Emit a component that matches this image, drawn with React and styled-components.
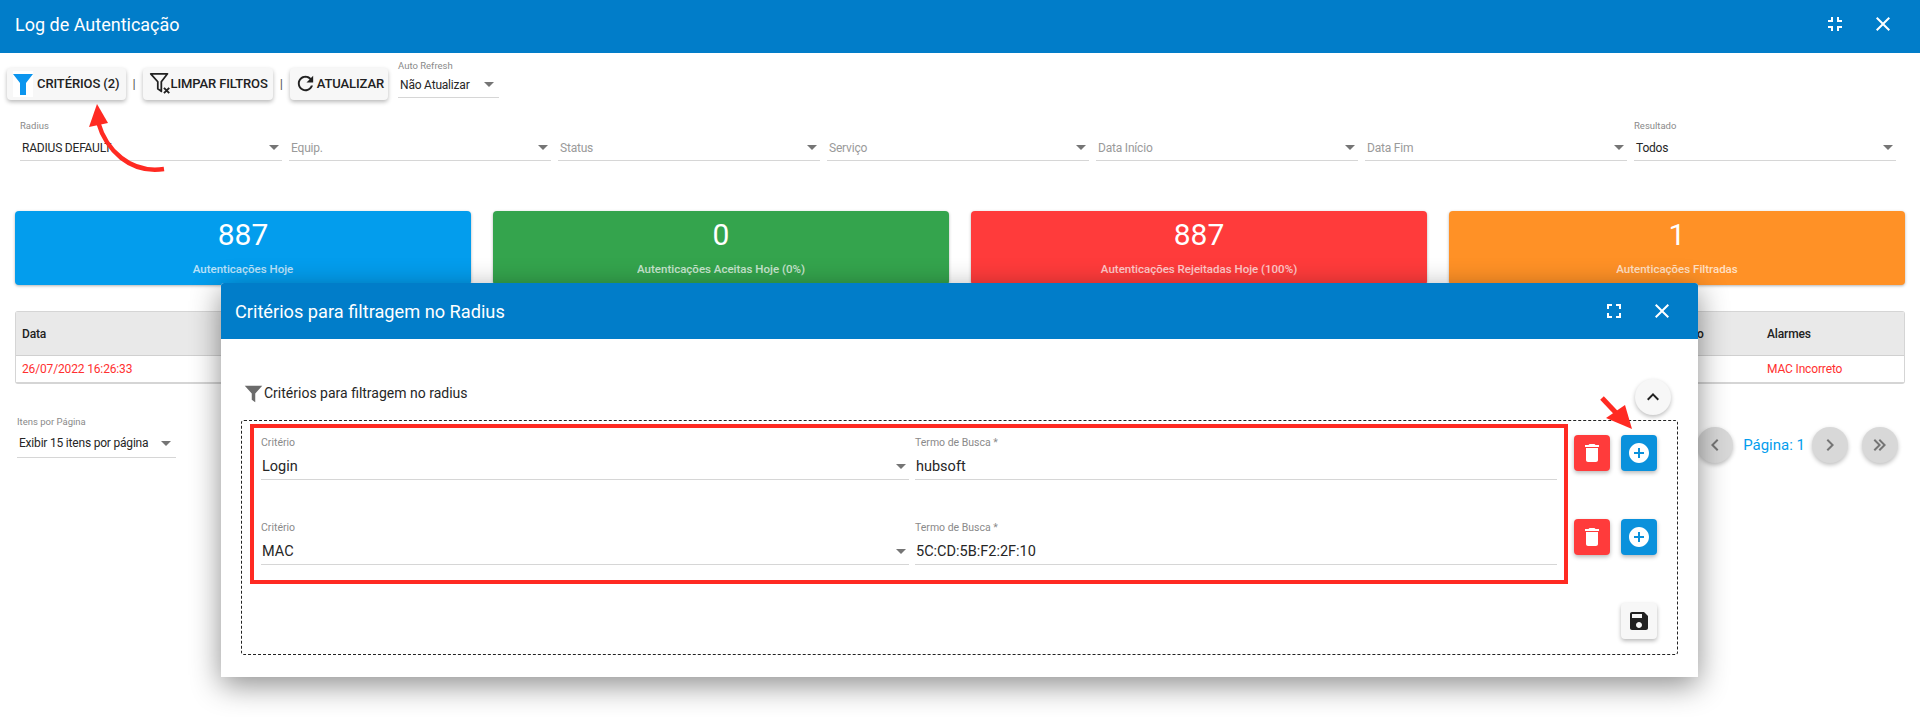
import React from "react";
import styled, { createGlobalStyle } from "styled-components";

const GlobalStyle = createGlobalStyle`
  html, body {
    margin: 0;
    padding: 0;
    height: 717px;
    overflow: hidden;
    background: #fff;
    font-family: Roboto, "Liberation Sans", sans-serif;
    color: #212121;
  }
  * { box-sizing: border-box; }
`;

const ICONS = {
  funnel: "M2 2h20l-7 9v12H9V11z",
  funnelSoft: "M2 3h20l-8 9v10l-4-3v-7z",
  refresh:
    "M17.65 6.35C16.2 4.9 14.21 4 12 4c-4.42 0-7.99 3.58-7.99 8s3.57 8 7.99 8c3.73 0 6.84-2.55 7.73-6h-2.08c-.82 2.33-3.04 4-5.65 4-3.31 0-6-2.69-6-6s2.69-6 6-6c1.66 0 3.14.69 4.22 1.78L13 11h7V4l-2.35 2.35z",
  trash: "M6 19c0 1.1.9 2 2 2h8c1.1 0 2-.9 2-2V7H6v12zM19 4h-3.5l-1-1h-5l-1 1H5v2h14V4z",
  plus: "M12 2C6.48 2 2 6.48 2 12s4.48 10 10 10 10-4.48 10-10S17.52 2 12 2zm5 11h-4v4h-2v-4H7v-2h4V7h2v4h4v2z",
  save: "M17 3H5c-1.11 0-2 .9-2 2v14c0 1.1.89 2 2 2h14c1.1 0 2-.9 2-2V7l-4-4zm-5 16c-1.66 0-3-1.34-3-3s1.34-3 3-3 3 1.34 3 3-1.34 3-3 3zm3-10H5V5h10v4z",
  expand: "M7 14H5v5h5v-2H7v-3zm-2-4h2V7h3V5H5v5zm12 7h-3v2h5v-5h-2v3zM14 5v2h3v3h2V5h-5z",
  shrink: "M5 16h3v3h2v-5H5v2zm3-8H5v2h5V5H8v3zm6 11h2v-3h3v-2h-5v5zm2-11V5h-2v5h5V8h-3z",
  close:
    "M19 6.41L17.59 5 12 10.59 6.41 5 5 6.41 10.59 12 5 17.59 6.41 19 12 13.41 17.59 19 19 17.59 13.41 12z",
  up: "M7.41 15.41L12 10.83l4.59 4.58L18 14l-6-6-6 6z",
  left: "M15.41 16.59L10.83 12l4.58-4.59L14 6l-6 6 6 6z",
  right: "M8.59 16.59L13.17 12 8.59 7.41 10 6l6 6-6 6z",
  last: "M5.59 7.41L10.18 12l-4.59 4.59L7 18l6-6-6-6zM12 6l-1.41 1.41L15.17 12l-4.58 4.59L12 18l6-6z",
};

const Icon = ({ name, size = 24, color = "currentColor" }) => (
  <svg width={size} height={size} viewBox="0 0 24 24" fill={color} style={{ flex: "none" }}>
    <path d={ICONS[name]} />
  </svg>
);

const ClearFilterIcon = () => (
  <svg width="22" height="25" viewBox="0 0 25 28" fill="none" stroke="#212121" style={{ flex: "none" }}>
    <path d="M2 3h19l-7 9v11l-4-3v-8z" strokeWidth="2" strokeLinejoin="round" />
    <path d="M17 19l6 6M23 19l-6 6" strokeWidth="2.2" />
  </svg>
);

const Page = styled.div`
  position: relative;
  width: 1920px;
  height: 717px;
  overflow: hidden;
`;

const TopBar = styled.header`
  display: flex;
  align-items: center;
  justify-content: space-between;
  height: 53px;
  padding: 0 25px 5px 15px;
  background: #017dc9;
  color: #fff;
  h1 {
    margin: 0;
    font-size: 18px;
    font-weight: 400;
  }
`;

const BarActions = styled.div`
  display: flex;
  align-items: center;
  gap: 24px;
  color: #fff;
`;

const Toolbar = styled.div`
  display: flex;
  align-items: center;
  height: 58px;
  padding: 3px 0 0 7px;
`;

const ToolButton = styled.div`
  display: flex;
  align-items: center;
  gap: ${(p) => p.$gap || 0}px;
  height: 32px;
  padding: 0 ${(p) => p.$pad || 5}px 0 ${(p) => p.$padLeft || 5}px;
  background: #f7f7f7;
  border-radius: 4px;
  box-shadow: 0 2px 4px rgba(0, 0, 0, 0.28);
  font-size: 13px;
  font-weight: 500;
  letter-spacing: -0.1px;
  white-space: nowrap;
`;

const IconPatch = styled.span`
  display: flex;
  align-items: center;
  justify-content: center;
  width: 20px;
  height: 26px;
  background: #fff;
`;

const Bar = styled.span`
  width: 17px;
  text-align: center;
  font-size: 13px;
  color: #555;
`;

const Field = styled.div`
  position: relative;
  display: flex;
  flex-direction: column;
  width: ${(p) => (p.$width ? `${p.$width}px` : "auto")};
  border-bottom: 1px solid #d6d6d6;
`;

const FieldLabel = styled.label`
  height: ${(p) => p.$h || 14}px;
  font-size: ${(p) => p.$size || 9.5}px;
  line-height: ${(p) => p.$h || 14}px;
  color: #8a8a8a;
  white-space: nowrap;
`;

const FieldValue = styled.div`
  display: flex;
  align-items: center;
  justify-content: space-between;
  height: ${(p) => p.$h || 24}px;
  padding-top: ${(p) => p.$top || 0}px;
  padding-left: ${(p) => p.$pad ?? 2}px;
  font-size: ${(p) => p.$size || 12}px;
  letter-spacing: ${(p) => (p.$size ? 0 : -0.2)}px;
  color: ${(p) => (p.$empty ? "#9a9a9a" : "#262626")};
  white-space: nowrap;
`;

const Caret = styled.i`
  width: 0;
  height: 0;
  margin-right: ${(p) => p.$right ?? 5}px;
  border-left: 5px solid transparent;
  border-right: 5px solid transparent;
  border-top: 5px solid #757575;
`;

const AutoRefresh = styled(Field)`
  margin: -9px 0 0 10px;
`;

const Filters = styled.div`
  display: grid;
  grid-template-columns: repeat(7, 262px);
  column-gap: 7px;
  padding: 0 0 0 20px;
  margin-top: 8px;
`;

const Cards = styled.div`
  display: grid;
  grid-template-columns: repeat(4, 456px);
  column-gap: 22px;
  margin: 50px 0 0 15px;
`;

const Card = styled.div`
  display: flex;
  flex-direction: column;
  align-items: center;
  height: 74px;
  padding-top: 6px;
  background: ${(p) => p.$bg};
  border-radius: 4px;
  box-shadow: 0 1px 3px rgba(0, 0, 0, 0.3);
  color: #fff;
  strong {
    font-size: 30px;
    font-weight: 400;
    line-height: 36px;
  }
  span {
    margin-top: 9px;
    font-size: 11.5px;
    font-weight: 500;
    opacity: 0.72;
  }
`;

const Table = styled.div`
  width: 1890px;
  margin: 26px 0 0 15px;
  border: 1px solid #d5d5d5;
  border-bottom-width: 2px;
  border-radius: 3px;
  font-size: 12px;
  letter-spacing: -0.15px;
`;

const TableRow = styled.div`
  display: grid;
  grid-template-columns: 1fr 70px 137px;
  align-items: center;
  height: ${(p) => p.$h}px;
  padding-left: 6px;
  background: ${(p) => p.$bg || "#fff"};
  border-bottom: ${(p) => (p.$line ? "1px solid #d0d0d0" : "none")};
  color: ${(p) => p.$color || "#212121"};
  font-weight: ${(p) => p.$weight || 400};
`;

const HiddenColumnEnd = styled.span`
  padding-right: 66px;
  text-align: right;
`;

const Footer = styled.div`
  display: flex;
  align-items: flex-start;
  justify-content: space-between;
  padding: 0 22px 0 17px;
  margin-top: 31px;
`;

const Pager = styled.div`
  display: flex;
  align-items: center;
  gap: 14px;
  margin-top: 12px;
`;

const RoundButton = styled.div`
  display: flex;
  align-items: center;
  justify-content: center;
  width: 36px;
  height: 36px;
  border-radius: 50%;
  background: ${(p) => p.$bg || "#d8d8d8"};
  box-shadow: 0 2px 4px rgba(0, 0, 0, 0.25);
  color: ${(p) => p.$color || "#757575"};
`;

const PageLabel = styled.span`
  margin: 0 -7px 0 -4px;
  font-size: 15px;
  color: #039ded;
`;

const Modal = styled.section`
  position: absolute;
  left: 221px;
  top: 283px;
  width: 1477px;
  height: 394px;
  background: #fff;
  border-radius: 3px 3px 0 0;
  box-shadow: 0 8px 30px rgba(0, 0, 0, 0.45);
`;

const ModalHeader = styled.div`
  display: flex;
  align-items: center;
  justify-content: space-between;
  height: 56px;
  padding: 0 24px 0 14px;
  background: #017dc9;
  border-radius: 3px 3px 0 0;
  color: #fff;
  h2 {
    margin: 0;
    font-size: 18.2px;
    font-weight: 400;
  }
`;

const SectionHead = styled.div`
  display: flex;
  align-items: center;
  justify-content: space-between;
  height: 40px;
  margin-top: 37px;
  padding: 2px 27px 0 22px;
`;

const SectionTitle = styled.div`
  display: flex;
  align-items: center;
  font-size: 14px;
  color: #262626;
  margin-top: -8px;
`;

const DashedBox = styled.div`
  position: relative;
  display: flex;
  flex-direction: column;
  width: 1437px;
  height: 235px;
  margin: 4px 0 0 20px;
  padding: 3px 0 0 8px;
  border: 1px dashed #222;
  border-radius: 3px;
`;

const CriteriaArea = styled.div`
  display: flex;
  flex-direction: column;
  gap: 41px;
  width: 1318px;
  height: 160px;
  padding: 8px 7px 0 7px;
  border: 4px solid #ff2a22;
`;

const CriteriaRow = styled.div`
  display: grid;
  grid-template-columns: 648px 1fr;
  column-gap: 6px;
`;

const Actions = styled.div`
  position: absolute;
  top: 14px;
  right: 20px;
  display: grid;
  grid-template-columns: 36px 36px;
  grid-auto-rows: 36px;
  gap: 48px 11px;
`;

const SquareButton = styled.div`
  display: flex;
  align-items: center;
  justify-content: center;
  grid-column: ${(p) => p.$col || "auto"};
  width: 36px;
  height: 36px;
  background: ${(p) => p.$bg};
  border-radius: 4px;
  box-shadow: 0 2px 4px rgba(0, 0, 0, 0.28);
  color: ${(p) => p.$color || "#fff"};
`;

const Arrow = styled.svg`
  position: absolute;
  left: 0;
  top: 0;
  pointer-events: none;
`;

const Criterion = ({ label, term }) => (
  <CriteriaRow>
    <Field>
      <FieldLabel $size={10.5}>Critério</FieldLabel>
      <FieldValue $size={14.5} $h={29} $top={3} $pad={1}>
        {label}
        <Caret $right={3} />
      </FieldValue>
    </Field>
    <Field>
      <FieldLabel $size={10.5}>Termo de Busca *</FieldLabel>
      <FieldValue $size={14.5} $h={29} $top={3} $pad={1}>{term}</FieldValue>
    </Field>
  </CriteriaRow>
);

const filters = [
  { label: "Radius", value: "RADIUS DEFAULT" },
  { value: "Equip." },
  { value: "Status" },
  { value: "Serviço" },
  { value: "Data Início" },
  { value: "Data Fim" },
  { label: "Resultado", value: "Todos" },
];

const cards = [
  { bg: "#039ded", value: 887, label: "Autenticações Hoje" },
  { bg: "#34a44d", value: 0, label: "Autenticações Aceitas Hoje (0%)" },
  { bg: "#ff3b3b", value: 887, label: "Autenticações Rejeitadas Hoje (100%)" },
  { bg: "#ff9126", value: 1, label: "Autenticações Filtradas" },
];

export default function App() {
  return (
    <Page>
      <GlobalStyle />
      <TopBar>
        <h1>Log de Autenticação</h1>
        <BarActions>
          <Icon name="shrink" />
          <Icon name="close" />
        </BarActions>
      </TopBar>

      <Toolbar>
        <ToolButton $pad={6} $padLeft={6} $gap={4}>
          <IconPatch>
            <Icon name="funnel" size={24} color="#0b95ee" />
          </IconPatch>
          CRITÉRIOS (2)
        </ToolButton>
        <Bar>|</Bar>
        <ToolButton $pad={5} $padLeft={6}>
          <ClearFilterIcon />
          LIMPAR FILTROS
        </ToolButton>
        <Bar>|</Bar>
        <ToolButton $pad={4} $padLeft={4}>
          <Icon name="refresh" size={23} />
          ATUALIZAR
        </ToolButton>
        <AutoRefresh $width={101}>
          <FieldLabel $h={12}>Auto Refresh</FieldLabel>
          <FieldValue $h={25}>
            Não Atualizar
            <Caret />
          </FieldValue>
        </AutoRefresh>
      </Toolbar>

      <Filters>
        {filters.map((f) => (
          <Field key={f.value}>
            <FieldLabel>{f.label}</FieldLabel>
            <FieldValue $empty={!f.label} $h={27} $top={2}>
              {f.value}
              <Caret $right={3} />
            </FieldValue>
          </Field>
        ))}
      </Filters>

      <Cards>
        {cards.map((c) => (
          <Card key={c.label} $bg={c.bg}>
            <strong>{c.value}</strong>
            <span>{c.label}</span>
          </Card>
        ))}
      </Cards>

      <Table>
        <TableRow $h={44} $bg="#e9e9e9" $line $weight={500}>
          <span>Data</span>
          <HiddenColumnEnd>o</HiddenColumnEnd>
          <span>Alarmes</span>
        </TableRow>
        <TableRow $h={26} $color="#ff3030">
          <span>26/07/2022 16:26:33</span>
          <span />
          <span>MAC Incorreto</span>
        </TableRow>
      </Table>

      <Footer>
        <Field $width={159}>
          <FieldLabel>Itens por Página</FieldLabel>
          <FieldValue $h={28}>
            Exibir 15 itens por página
            <Caret />
          </FieldValue>
        </Field>
        <Pager>
          <RoundButton><Icon name="left" /></RoundButton>
          <PageLabel>Página: 1</PageLabel>
          <RoundButton><Icon name="right" /></RoundButton>
          <RoundButton><Icon name="last" /></RoundButton>
        </Pager>
      </Footer>

      <Modal>
        <ModalHeader>
          <h2>Critérios para filtragem no Radius</h2>
          <BarActions>
            <Icon name="expand" />
            <Icon name="close" />
          </BarActions>
        </ModalHeader>
        <SectionHead>
          <SectionTitle>
            <Icon name="funnelSoft" size={21} color="#6b6b6b" />
            Critérios para filtragem no radius
          </SectionTitle>
          <RoundButton $bg="#f7f7f7" $color="#212121"><Icon name="up" /></RoundButton>
        </SectionHead>
        <DashedBox>
          <CriteriaArea>
            <Criterion label="Login" term="hubsoft" />
            <Criterion label="MAC" term="5C:CD:5B:F2:2F:10" />
          </CriteriaArea>
          <Actions>
            <SquareButton $bg="#ff3b3b"><Icon name="trash" /></SquareButton>
            <SquareButton $bg="#0a91dc"><Icon name="plus" /></SquareButton>
            <SquareButton $bg="#ff3b3b"><Icon name="trash" /></SquareButton>
            <SquareButton $bg="#0a91dc"><Icon name="plus" /></SquareButton>
            <SquareButton $bg="#f7f7f7" $color="#212121" $col="2"><Icon name="save" /></SquareButton>
          </Actions>
        </DashedBox>
      </Modal>

      <Arrow width="1920" height="717" viewBox="0 0 1920 717">
        <path d="M164 169C130 174 106 150 98 122" fill="none" stroke="#ff2a22" strokeWidth="4.5" />
        <path d="M97 104L89 127L108 123z" fill="#ff2a22" />
        <path d="M1602 398L1620 417" fill="none" stroke="#ff2a22" strokeWidth="5" />
        <path d="M1632 429L1625 405L1606 418z" fill="#ff2a22" />
      </Arrow>
    </Page>
  );
}
